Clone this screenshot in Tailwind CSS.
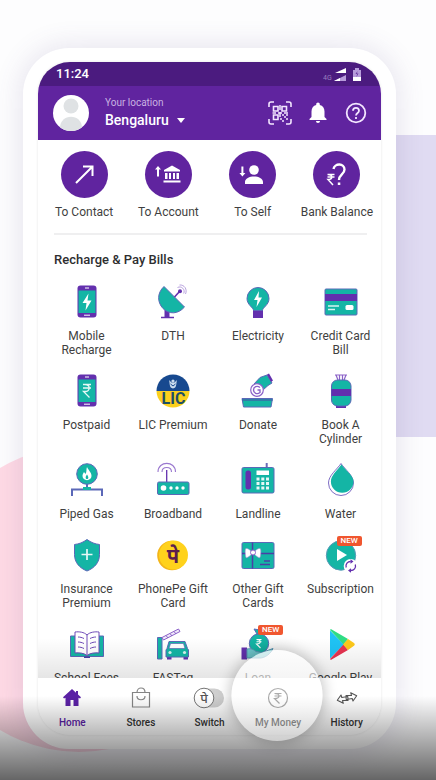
<!DOCTYPE html>
<html lang="en">
<head>
<meta charset="utf-8">
<meta name="viewport" content="width=device-width, initial-scale=1">
<title>PhonePe</title>
<script src="https://cdn.jsdelivr.net/npm/@tailwindcss/browser@4"></script>
</head>
<body class="font-[Roboto,'Noto_Sans',sans-serif] text-[#3f3f41]">
<div class="relative h-screen overflow-hidden bg-[#fdfdfe] pt-12 pr-10 pb-[31px] pl-[23px]">
  <!-- backdrop shapes -->
  <div class="absolute top-[135px] -right-10 h-[302px] w-40 rounded-[40px] bg-[#e0dbf2]"></div>
  <div class="absolute bottom-7 -left-[74px] size-[306px] rounded-full bg-[#ffdae5]"></div>

  <!-- phone -->
  <div class="relative flex h-full flex-col rounded-[46px] bg-white px-[15px] py-[14px] shadow-[0_0_26px_4px_rgba(90,80,140,0.13)]">
    <div class="flex min-h-0 flex-1 flex-col overflow-hidden rounded-[32px] bg-white shadow-[0_0_2px_1px_rgba(0,0,0,0.05)]">

      <div class="flex h-6 shrink-0 items-center justify-between bg-[#4b1b7f] pr-[18px] pl-[18px] text-white">
        <span class="text-[13px] font-medium">11:24</span>
        <svg class="h-[18px] w-10" viewBox="0 0 40 18" aria-hidden="true">
          <text x="0" y="15" font-size="7" fill="#9a7fbf">4G</text>
          <path d="M12 8 23 3v5z" fill="#fff"/><path d="M11 16 23 10v6z" fill="#b79bdb"/><path d="M11 16l6-3v3z" fill="#fff"/>
          <path d="M32 3h4v2h2v11h-8V5h2z" fill="#b79bdb"/><path d="M30 12h8v4h-8z" fill="#fff"/><path d="M34.500 6l-2 3h1.500l-.5 3 2-3.500h-1.500z" fill="#6a3ba0"/>
        </svg>
      </div>

      <header class="flex h-[54px] shrink-0 items-center bg-[#60249f] pr-[13px] pl-[15px] text-white">
        <svg class="size-9 rounded-full bg-white" viewBox="0 0 36 36" aria-hidden="true">
          <circle cx="18" cy="11" r="7.500" fill="#dfe2e4"/><path d="M7 33c0-15 22-15 22 0l-5 4H12z" fill="#dfe2e4"/>
        </svg>
        <button class="ml-4 flex flex-col items-start text-left">
          <span class="text-[10px] leading-[14px] text-[#c9b3e2]">Your location</span>
          <span class="flex items-center gap-2 text-[14px] leading-5 font-medium">Bengaluru
            <svg class="h-[5px] w-2" viewBox="0 0 8 5" aria-hidden="true"><path d="M0 0h8L4 5z" fill="#fff"/></svg>
          </span>
        </button>
        <div class="ml-auto flex items-center gap-[14px]">
          <button aria-label="Scan QR code"><svg class="size-6" viewBox="0 0 24 24" fill="none" stroke="#f3e6ff" stroke-width="1.600">
            <path d="M1 6V3q0-2 2-2h3M18 1h3q2 0 2 2v3M23 18v3q0 2-2 2h-3M6 23H3q-2 0-2-2v-3"/>
            <path d="M5.500 5.500h4.500v4.500H5.500zM14 5.500h4.500v4.500H14zM5.500 14h4.500v4.500H5.500z"/>
            <path d="M12 4v5M4.500 12H8M10 12h4M12 11v5M16 12h4M14 14h2M16 16h2M18 14h2M12 18h2M14 20h2M18 18h2" stroke-width="1.500"/>
          </svg></button>
          <button aria-label="Notifications"><svg class="size-6" viewBox="0 0 24 24" fill="#fff">
            <path d="M12 22c1.200 0 2-.8 2-2h-4c0 1.200.8 2 2 2zM18.500 16v-5.500c0-3.200-1.700-5.800-4.700-6.500v-.6c0-1-.8-1.800-1.800-1.800s-1.800.8-1.800 1.800V4C7.200 4.700 5.500 7.300 5.500 10.500V16l-2 2v1h17v-1z"/>
          </svg></button>
          <button aria-label="Help"><svg class="size-6" viewBox="0 0 24 24" fill="none" stroke="#f3e6ff" stroke-width="1.800">
            <circle cx="12" cy="12" r="9.300"/><path d="M9 9.800c0-4 6-4 6 0 0 2.100-3 2.200-3 4.700M12 16v2"/>
          </svg></button>
        </div>
      </header>

      <main class="relative min-h-0 flex-1 overflow-hidden">
        <section class="grid grid-cols-4 pt-[11px] pr-[2px] pl-1 text-center text-[12px]" aria-label="Transfer money">
          <button class="flex flex-col items-center gap-[7px] whitespace-nowrap">
            <svg class="size-[47px] rounded-full bg-[#60249f]" viewBox="0 0 47 47" fill="none" stroke="#fff" stroke-width="2"><path d="M15 32 31 16M22 15.500h9.500V25"/></svg>
            <span class="leading-[14px]">To Contact</span>
          </button>
          <button class="flex flex-col items-center gap-[7px] whitespace-nowrap">
            <svg class="size-[47px] rounded-full bg-[#60249f]" viewBox="0 0 47 47" fill="#fff"><path d="M13 15l3 3.500h-2v7h-2v-7h-2zM27 14.500l8 4.500v1.500H19V19zM20 22h2.500v6H20zM24 22h2v6h-2zM28 22h2v6h-2zM31.500 22H34v6h-2.500zM18.500 29.500h17v2h-17z"/></svg>
            <span class="leading-[14px]">To Account</span>
          </button>
          <button class="flex flex-col items-center gap-[7px] whitespace-nowrap">
            <svg class="size-[47px] rounded-full bg-[#60249f]" viewBox="0 0 47 47" fill="#fff"><circle cx="25" cy="19" r="4.800"/><path d="M16 33v-2c0-3.500 4.500-5.500 9-5.500s9 2 9 5.500v2zM12.400 15.500h2v6.500h2l-3 3.500-3-3.500h2z"/></svg>
            <span class="leading-[14px]">To Self</span>
          </button>
          <button class="flex flex-col items-center gap-[7px] whitespace-nowrap">
            <svg class="size-[47px] rounded-full bg-[#60249f]" viewBox="0 0 47 47" fill="none" stroke="#fff"><path d="M20.500 18c1-6 11-6 11 .5 0 5-5.500 5-5.500 10.500" stroke-width="2.400"/><path d="M24.800 31.500h2.500v2.500h-2.500z" fill="#fff" stroke="none"/><path d="M14.500 23.500h7M14.500 26h7M15 23.500c5 0 5 5 0 5l5 5.500" stroke-width="1.500"/></svg>
            <span class="leading-[14px]">Bank Balance</span>
          </button>
        </section>

        <hr class="mt-[14px] mr-[14px] ml-4 border-t-2 border-[#efeff0]">
        <h1 class="mt-4 ml-4 text-[13px] leading-[18px] font-medium text-[#2e2e30]">Recharge &amp; Pay Bills</h1>

        <section class="mt-[15px] grid grid-cols-[87fr_86fr_84fr_81fr] gap-y-4 pl-[5px] text-center text-[12px] leading-[14px]" aria-label="Recharge and pay bills">
          <button class="flex flex-col items-center gap-[9px]">
            <svg class="size-9" viewBox="0 0 36 36"><rect x="8.500" y="1.500" width="19" height="32" rx="3" fill="#6330ae"/><path d="M9.500 6.500h17V29h-17z" fill="#14b5a5"/><path d="M16 4h4M15 31.200h6" stroke="#fff"/><path d="M19.500 9.500 13.500 19h4l-1 7.500 6-10h-4z" fill="#fff"/></svg>
            <span>Mobile<br>Recharge</span>
          </button>
          <button class="flex flex-col items-center gap-[9px]">
            <svg class="size-9" viewBox="0 0 36 36"><path d="M9.500 26h5v7h-5z" fill="#6330ae"/><path d="M6 33.500h13" stroke="#6330ae" stroke-width="1.500"/><path d="M9 2.500C2 9 2 18 8 24.500c6 6 15 6 21.500-1.500z" fill="#14b5a5" stroke="#5b68b8"/><path d="M19.500 13 25 7" stroke="#6330ae" stroke-width="1.600"/><circle cx="25" cy="7.200" r="2" fill="#6330ae"/><path d="M22.500 3.500c4-2 8 2 6.200 6M24.500 1c5-.5 8 4.500 6 9" fill="none" stroke="#a78bd6" stroke-width=".8"/></svg>
            <span>DTH</span>
          </button>
          <button class="flex flex-col items-center gap-[9px]">
            <svg class="size-9" viewBox="0 0 36 36"><path d="M13 26h10v8H13z" fill="#6330ae"/><path d="M13.500 26.500c0-3-6.500-5.500-6.500-12a11 11 0 0 1 22 0c0 6.500-6.500 9-6.500 12z" fill="#14b5a5" stroke="#5b68b8"/><path d="M19 7l-5 9h3.500l-1 7 5.500-9.500h-3.500z" fill="#fff"/></svg>
            <span>Electricity</span>
          </button>
          <button class="flex flex-col items-center gap-[9px]">
            <svg class="size-9" viewBox="0 0 36 36"><rect x="2" y="5" width="32" height="26" rx="1" fill="#14b5a5" stroke="#5b68b8"/><path d="M2 10h32v7H2z" fill="#6330ae"/><path d="M5 22h11M5 25.500h7" stroke="#d6f3ef" stroke-width="1.500"/><rect x="22.500" y="21" width="8" height="5" rx="1.500" fill="#fff"/></svg>
            <span>Credit Card<br>Bill</span>
          </button>

          <button class="flex flex-col items-center gap-[9px]">
            <svg class="size-9" viewBox="0 0 36 36"><rect x="8.500" y="1.500" width="19" height="32" rx="3" fill="#6330ae"/><path d="M9.500 6.500h17V29h-17z" fill="#14b5a5"/><path d="M16 4h4M15 31.200h6" stroke="#fff"/><path d="M14 11.500h8M14 15h8M14 11.500h2c5.500 0 5.500 7 0 7h-1.500l6 6" fill="none" stroke="#e6f8f6" stroke-width="1.300"/></svg>
            <span>Postpaid</span>
          </button>
          <button class="flex flex-col items-center gap-[9px]">
            <svg class="size-9" viewBox="0 0 36 36"><path d="M1.500 18a16.500 16.500 0 0 1 33 0z" fill="#17498f"/><path d="M1.500 18a16.500 16.500 0 0 0 33 0z" fill="#fbd01e"/><path d="M14 7c1 3 0 8 4 8.500 4-.5 3-5.500 4-8.500l-2.500 2.500h-3z" fill="#c9dcee"/><circle cx="18" cy="8" r="1.600" fill="#c9dcee"/><path d="M15.500 11l2.500 2 2.500-2" fill="none" stroke="#17498f"/><text x="18.500" y="31" text-anchor="middle" font-size="16" font-weight="700" fill="#1e4f66" font-family="Roboto">LIC</text></svg>
            <span>LIC Premium</span>
          </button>
          <button class="flex flex-col items-center gap-[9px]">
            <svg class="size-9" viewBox="0 0 36 36"><path d="M14 11l6-6.500 7-2.500 5 8-4 2.500-5 4.500-5-1z" fill="#14b5a5" stroke="#5b68b8"/><path d="M27 1.500l2-1 4 7-2 1.500z" fill="#6330ae"/><circle cx="17" cy="17" r="6.300" fill="#fff" stroke="#8c62c8" stroke-width="1.200"/><path d="M20 14.500c-3-2.500-6.500-.5-6.500 2.500s3.500 5 6.500 2.500V17h-2.500" fill="none" stroke="#8c62c8" stroke-width="1.400"/><path d="M2 25.500h30.500l-1.500 8.500H3.500z" fill="#14b5a5" stroke="#5b68b8"/><path d="M2 27h30.500" stroke="#3b6aa8" stroke-width="1.500"/></svg>
            <span>Donate</span>
          </button>
          <button class="flex flex-col items-center gap-[9px]">
            <svg class="size-9" viewBox="0 0 36 36"><path d="M12 2h12M13 2l2 5M23 2l-2 5M16.500 2v5M19.500 2v5" stroke="#8c62c8" stroke-width="1.200"/><path d="M13 32h10v3H13z" fill="#6330ae"/><rect x="8.500" y="7" width="19.500" height="26" rx="6" fill="#14b5a5" stroke="#5b68b8"/><path d="M8.500 16H28v7H8.500z" fill="#6330ae"/></svg>
            <span>Book A<br>Cylinder</span>
          </button>

          <button class="flex flex-col items-center gap-[9px]">
            <svg class="size-9" viewBox="0 0 36 36"><path d="M18 22v5M3 34v-6.500h30V34" fill="none" stroke="#5b68b8" stroke-width="2"/><path d="M14 26.500h8" stroke="#14b5a5" stroke-width="3"/><circle cx="18" cy="12" r="10.300" fill="#14b5a5" stroke="#5b68b8"/><path d="M18 5c1 3 4.500 5 4.500 9 0 5.500-9 5.500-9 0 0-2 1-3 1.500-4l1.500 2C18 10 17 7 18 5z" fill="#fff"/><path d="M18 12.500c2 3 1.500 4.500 0 4.500s-2-2 0-4.500z" fill="#14b5a5"/></svg>
            <span>Piped Gas</span>
          </button>
          <button class="flex flex-col items-center gap-[9px]">
            <svg class="size-9" viewBox="0 0 36 36"><path d="M11.700 8v12" stroke="#6330ae" stroke-width="1.300"/><path d="M7 10c0-6 9.500-6 9.500 0M3 10c0-11.500 17.500-11.500 17.500 0" fill="none" stroke="#9a78cf" stroke-width="1.100"/><rect x="2.500" y="20" width="31.500" height="12.500" rx="1.500" fill="#14b5a5" stroke="#5b68b8"/><g fill="#fff"><circle cx="8.500" cy="26" r="2.800"/><circle cx="16" cy="26" r="1.700"/><circle cx="22" cy="26" r="1.700"/><circle cx="28" cy="26" r="1.700"/></g></svg>
            <span>Broadband</span>
          </button>
          <button class="flex flex-col items-center gap-[9px]">
            <svg class="size-9" viewBox="0 0 36 36"><path d="M26.700 1v5" stroke="#6b6cb8" stroke-width="2"/><rect x="2" y="5.500" width="32" height="25.500" rx="1.500" fill="#14b5a5" stroke="#5b68b8"/><rect x="5.500" y="8.500" width="5.500" height="19" rx="2.500" fill="#6330ae"/><path d="M16.500 8.500h12.500v4.500H16.500z" fill="#fff"/><g fill="#e6f8f6"><path d="M16.500 15.500h3v3h-3zM21.300 15.500h3v3h-3zM26 15.500h3v3h-3zM16.500 20h3v3h-3zM21.300 20h3v3h-3zM26 20h3v3h-3zM16.500 24.500h3v3h-3zM21.300 24.500h3v3h-3zM26 24.500h3v3h-3z"/></g></svg>
            <span>Landline</span>
          </button>
          <button class="flex flex-col items-center gap-[9px]">
            <svg class="size-9" viewBox="0 0 36 36"><path d="M18 1.500c4 6 12.500 12 12.500 19.500a12.500 12.500 0 0 1-25 0C5.500 13.500 14 7.500 18 1.500z" fill="#fff" stroke="#7d6cc4"/><path d="M18.500 2.500c4 6 12 11 12 17a11.300 11.300 0 0 1-22.600 0C7.900 13.500 14.500 8 18.500 2.500z" fill="#14b5a5"/></svg>
            <span>Water</span>
          </button>

          <button class="flex flex-col items-center gap-[9px]">
            <svg class="size-9" viewBox="0 0 36 36"><path d="M18 2.500c4 3 8 4.500 12.500 5v10c0 8-5 13.500-12.500 16.500C10.500 31 5.500 25.500 5.500 17.500v-10C10 7 14 5.500 18 2.500z" fill="#14b5a5" stroke="#5b68b8"/><path d="M18 12v11M12.500 17.500h11" stroke="#e6f8f6" stroke-width="1.700"/></svg>
            <span>Insurance<br>Premium</span>
          </button>
          <button class="flex flex-col items-center gap-[9px]">
            <svg class="size-9" viewBox="0 0 36 36"><circle cx="17" cy="18.500" r="14.800" fill="#f3b51a"/><circle cx="18.500" cy="18" r="14.500" fill="#ffd21c"/><text x="18" y="26" text-anchor="middle" font-size="20" font-weight="700" fill="#5b1e4e">पे</text></svg>
            <span>PhonePe Gift<br>Card</span>
          </button>
          <button class="flex flex-col items-center gap-[9px]">
            <svg class="size-9" viewBox="0 0 36 36"><rect x="2" y="5.500" width="32" height="26" rx="1.500" fill="#14b5a5" stroke="#5b68b8"/><path d="M2 16.500h32M12.500 5.500v26" stroke="#4a3fa6" stroke-width="1.500"/><path d="M12.500 16c-2-3-5-5-6.500-4.500s-.5 8 0 9 4.500-1.500 6.500-4.500zM13.500 16c2-3 5-5 6.500-4.500s.5 8 0 9-4.500-1.500-6.500-4.500z" fill="#fff" stroke="#a78bd6" stroke-width=".6"/><circle cx="13" cy="15.500" r="2.500" fill="#fff" stroke="#8c62c8"/><path d="M24 24h6M20 27.500h10" stroke="#4a3fa6" stroke-width="1.500"/></svg>
            <span>Other Gift<br>Cards</span>
          </button>
          <button class="relative flex flex-col items-center gap-[9px]">
            <svg class="size-9" viewBox="0 0 36 36"><circle cx="18" cy="18.500" r="14.700" fill="#14b5a5" stroke="#5b9ab8"/><path d="M14 12v12l10-6z" fill="#fff"/><circle cx="27.700" cy="29" r="7" fill="#fff"/><path d="M23.200 30.500c-1-3.500 1.500-6 4.500-6M32.300 27.500c1 3.500-1.500 6-4.500 6" fill="none" stroke="#6330ae" stroke-width="1.300"/><path d="M27.500 22.200l3 2.300-3 2.300zM28 31.200l-3 2.300 3 2.300z" fill="#6330ae"/></svg>
            <span class="absolute -top-px left-1/2 -ml-1 rounded-[2px] bg-[#f0562f] px-1 text-[8px] leading-[10px] font-medium text-white">NEW</span>
            <span>Subscription</span>
          </button>

          <button class="flex flex-col items-center gap-[9px]">
            <svg class="size-9" viewBox="0 0 36 36"><path d="M1.500 10h33v20.500h-33z" fill="#14b5a5" stroke="#5b68b8"/><path d="M15 30.500h6v1.500h-6z" fill="#4a3fa6"/><path d="M18 9c-3-3-8-3.500-12-3v21c4-.5 9 0 12 2.500 3-2.500 8-3 12-2.500V6c-4-.5-9 0-12 3zM18 9v20" fill="#fff" stroke="#6f4bb8"/><path d="M9 11c2 0 4 .5 6 1.500M9 16c2 0 4 .5 6 1.500M9 21c2 0 4 .5 6 1.500M27 11c-2 0-4 .5-6 1.500M27 16c-2 0-4 .5-6 1.500M27 21c-2 0-4 .5-6 1.500" fill="none" stroke="#6f4bb8"/></svg>
            <span>School Fees</span>
          </button>
          <button class="flex flex-col items-center gap-[9px]">
            <svg class="size-9" viewBox="0 0 36 36"><path d="M2.500 11.500h4.500V33H2.500z" fill="#14b5a5" stroke="#5b68b8"/><path d="M7 11.500 23.500 3l1.500 2.500L8.500 14z" fill="#efe8fa" stroke="#8c62c8"/><path d="M11 9.500l2 2.500M15 7.500l2 2.500M19 5.500l2 2.500" stroke="#8c62c8"/><path d="M12 29h4.500v4.500H12zM28.500 29H33v4.500h-4.500z" fill="#6330ae"/><path d="M14 15.500h16l2.500 7 1 1.500v7H11v-7l1-1.500z" fill="#14b5a5" stroke="#5b68b8"/><path d="M15.500 17.500h13l1.500 5H14z" fill="#fff" stroke="#5b68b8" stroke-width=".7"/><circle cx="15" cy="26.500" r="1.600" fill="#d6f3ef"/><circle cx="29.500" cy="26.500" r="1.600" fill="#d6f3ef"/></svg>
            <span>FASTag</span>
          </button>
          <button class="relative flex flex-col items-center gap-[9px]">
            <svg class="size-9" viewBox="0 0 36 36"><path d="M14 3l3 5h5l2-5-4 1z" fill="#14b5a5" stroke="#5b68b8"/><circle cx="19" cy="17.500" r="9.700" fill="#14b5a5" stroke="#5b68b8"/><path d="M16.500 13.500h5M16.500 15.800h5M16.500 13.500c5 0 5 4.500 0 4.500l4 4" fill="none" stroke="#fff" stroke-width="1.100"/><path d="M1.500 21.500h5.500v12H1.500z" fill="#6330ae"/><path d="M7 23c5-1 7 1 9 2.500l6 1 11-4c-2 5-8 9.500-13 9.500H7z" fill="#6fcbd0" stroke="#5b98b8"/></svg>
            <span class="absolute -top-px left-1/2 rounded-[2px] bg-[#f0562f] px-1 text-[8px] leading-[10px] font-medium text-white">NEW</span>
            <span>Loan</span>
          </button>
          <button class="flex flex-col items-center gap-[9px]">
            <svg class="size-9" viewBox="0 0 36 36"><path d="M7 4.500v28L21 18.500z" fill="#1fc3f5"/><path d="M7 4c0-.8 1-1 1.700-.5L25 13l-4.500 5.500z" fill="#2fdc84"/><path d="M7 33c0 .8 1 1 1.700.5L25 24l-4.500-5.500z" fill="#e63350"/><path d="M25 13l6 4c1 .8 1 2 0 2.700L25 24l-5-5.500z" fill="#fdc81a"/></svg>
            <span class="whitespace-nowrap">Google Play</span>
          </button>
        </section>
        <div class="pointer-events-none absolute inset-x-0 bottom-0 h-10 bg-linear-to-b from-black/0 to-black/10"></div>
      </main>

      <nav class="grid h-[57px] shrink-0 grid-cols-5 bg-white text-center text-[10px] font-medium text-[#333]">
        <a href="#" class="flex flex-col items-center gap-[7px] pt-2 text-[#5b21a5]" aria-current="page">
          <svg class="size-6" viewBox="0 0 24 24" fill="#5b21a5"><path d="M12 3l4 3.700V5h2v3.600l3 2.700-1 1.200-1.500-.8V20h-5v-6h-3v6h-5v-8.300L4 12.500l-1-1.200z"/></svg>
          <span class="leading-3">Home</span>
        </a>
        <a href="#" class="flex flex-col items-center gap-[7px] pt-2">
          <svg class="size-6" viewBox="0 0 24 24" fill="none" stroke="#858585" stroke-width="1.200"><path d="M3.500 6.500h17v14.500h-17zM8 6.500c0-6 8-6 8 0M8 10c0 5 8 5 8 0"/></svg>
          <span class="leading-3">Stores</span>
        </a>
        <a href="#" class="flex flex-col items-center gap-[7px] pt-2">
          <svg class="h-6 w-8" viewBox="0 0 32 24"><rect x="1" y="2.500" width="30" height="19" rx="9.500" fill="#cfcfcf"/><circle cx="11" cy="12" r="9.800" fill="#fff" stroke="#777"/><text x="11" y="16.500" text-anchor="middle" font-size="13" font-weight="500" fill="#555">पे</text></svg>
          <span class="leading-3">Switch</span>
        </a>
        <a href="#" class="flex flex-col items-center gap-[7px] pt-2 text-[#111]">
          <svg class="size-6" viewBox="0 0 24 24" fill="none" stroke="#444" stroke-width="1.200"><circle cx="12" cy="12" r="9.500"/><path d="M8.500 7.500h7M8.500 10h7M8.500 7.500c6 0 6 5 0 5l5 5"/></svg>
          <span class="leading-3">My Money</span>
        </a>
        <a href="#" class="flex flex-col items-center gap-[7px] pt-2">
          <svg class="size-6" viewBox="0 0 24 24" fill="none" stroke="#555" stroke-width="1.100" stroke-linejoin="round"><path d="M11 9.500h5.500l-.8-2.800 6 3-3.700 5.300-.8-2.500-6 1zM13 14.500H7.500l.8 2.800-6-3L6 9l.8 2.500 6-1z"/></svg>
          <span class="leading-3">History</span>
        </a>
      </nav>
    </div>

    <!-- spotlight over My Money -->
    <div class="pointer-events-none absolute bottom-2 left-[68%] z-20 size-[91px] -translate-x-1/2 rounded-full bg-linear-to-b from-white/70 to-white/40 shadow-[0_0_14px_2px_rgba(0,0,0,0.22)]"></div>
  </div>

  <div class="pointer-events-none absolute inset-x-0 bottom-0 z-10 h-[84px] bg-linear-to-b from-black/0 to-black/60"></div>
</div>
</body>
</html>
